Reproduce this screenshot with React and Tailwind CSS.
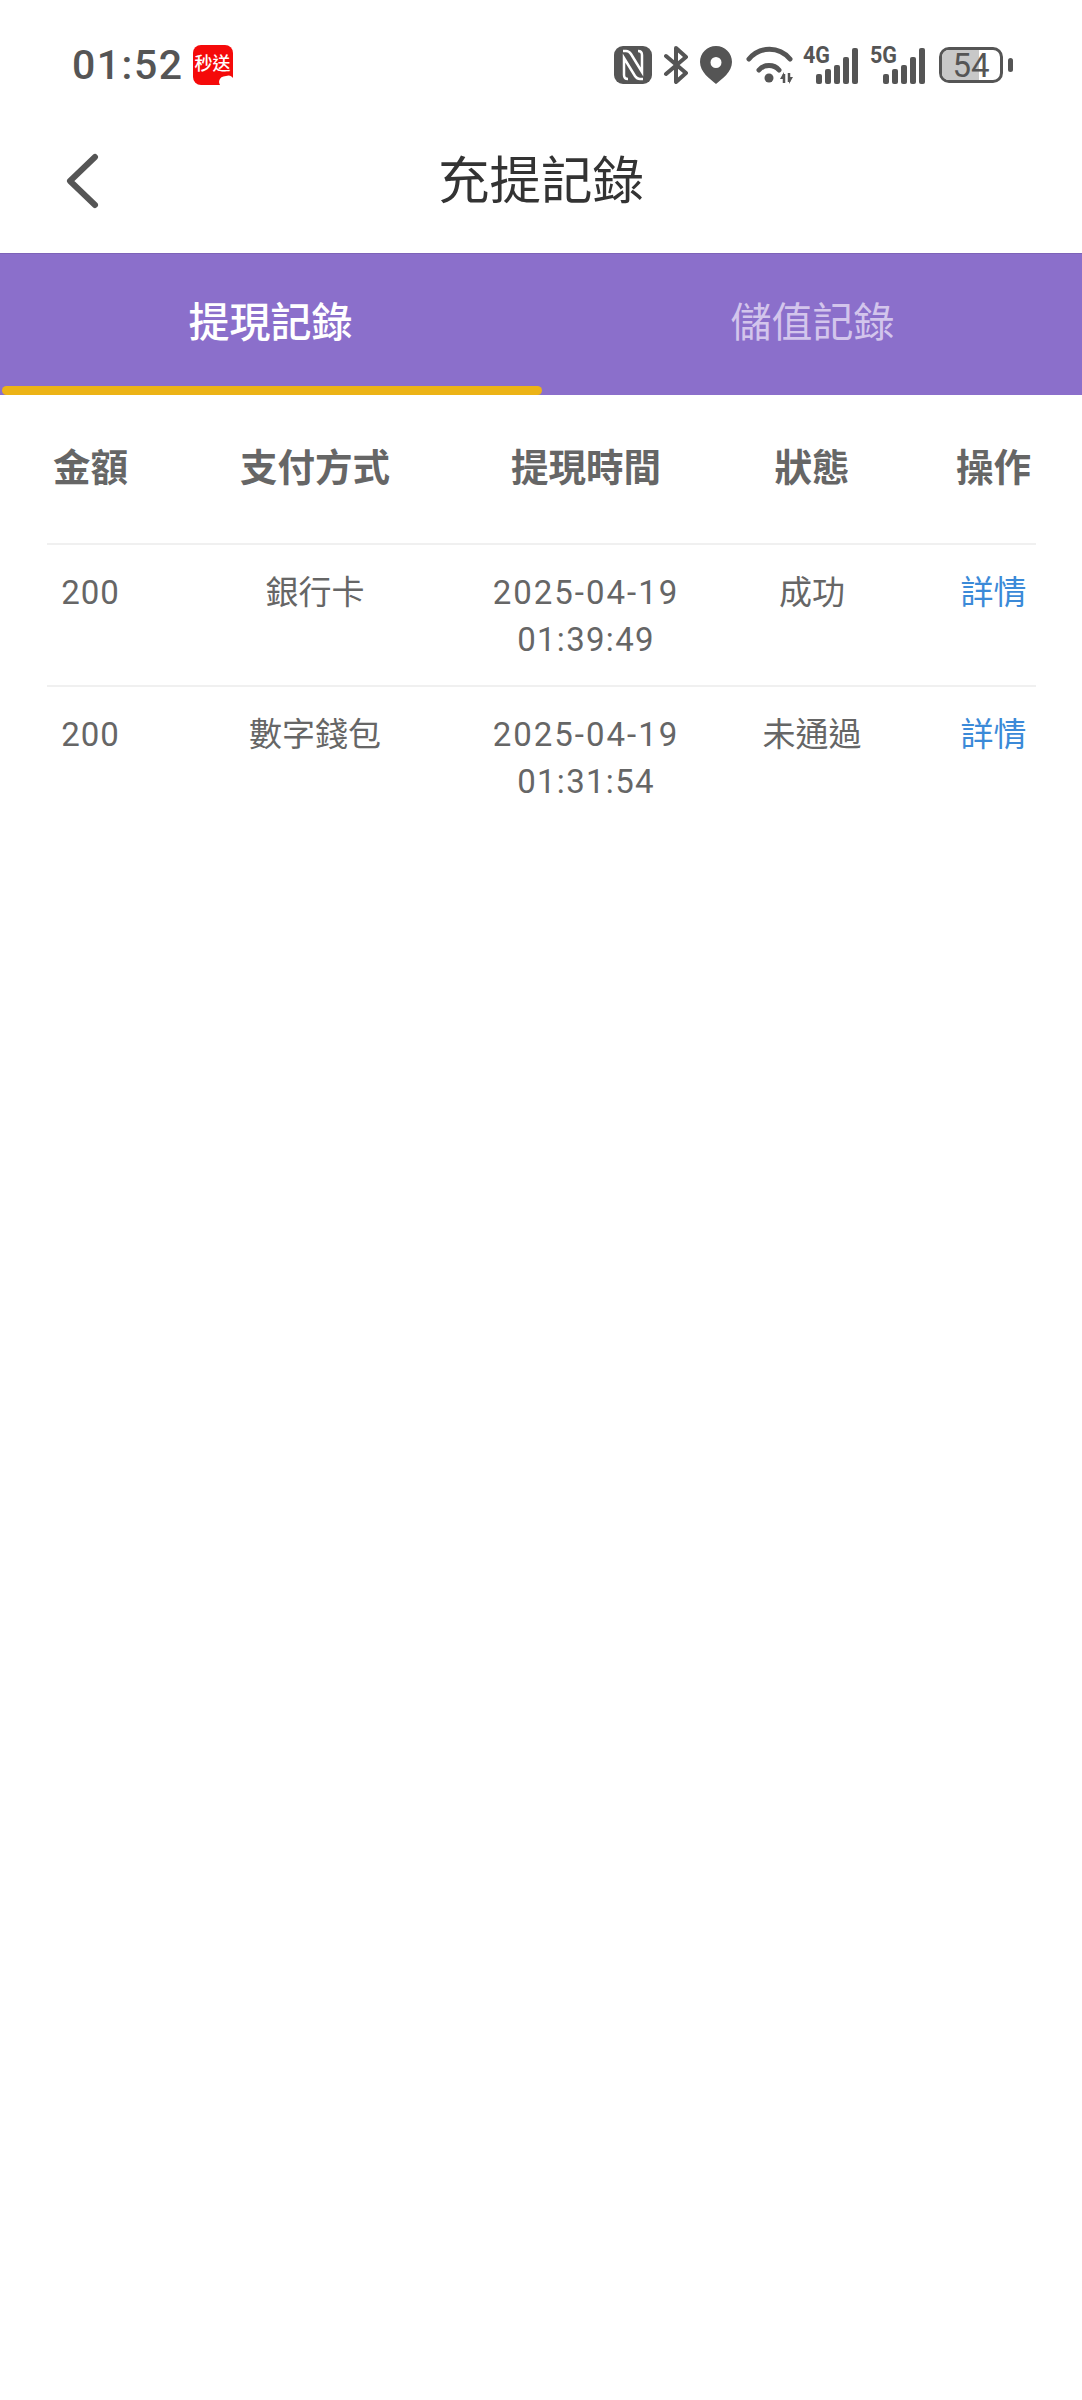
import React from 'react';

const rows = [
  { amount: '200', method: '銀行卡', date: '2025-04-19', time: '01:39:49', status: '成功' },
  { amount: '200', method: '數字錢包', date: '2025-04-19', time: '01:31:54', status: '未通過' },
];

const gridCols = 'grid grid-cols-[87px_352px_200px_252px_1fr] text-center';

function Signal({ label }) {
  return (
    <svg width="57" height="46" viewBox="0 -8 57 46" fill="#555" className="-mt-[8px]">
      <text x="0" y="17" fontSize="24" fontWeight="700" fontFamily="Roboto, sans-serif" fill="#555" textLength="27" lengthAdjust="spacingAndGlyphs">{label}</text>
      <rect x="13" y="28" width="6" height="10" rx="2" />
      <rect x="22" y="23" width="6" height="15" rx="2" />
      <rect x="31" y="19" width="6" height="19" rx="2" />
      <rect x="40" y="11" width="6" height="27" rx="2" />
      <rect x="49" y="2" width="6" height="36" rx="2" />
    </svg>
  );
}

function StatusIcons() {
  return (
    <div className="flex items-center">
      {/* nfc */}
      <svg width="38" height="38" viewBox="0 0 38 38" className="mr-[11px]">
        <rect x="0" y="0" width="38" height="38" rx="9" fill="#555" />
        <path d="M9 5 H12 Q15 5 17 8 L28 26 V9 Q28 5 24 5 M29 33 H26 Q23 33 21 30 L10 12 V29 Q10 33 14 33" stroke="#fff" strokeWidth="2.5" fill="none" />
      </svg>
      {/* bluetooth */}
      <svg width="26" height="38" viewBox="0 0 26 38" className="mr-[11px]" fill="none" stroke="#555" strokeWidth="4" strokeLinejoin="round" strokeLinecap="round">
        <path d="M3 10 L23 27 L13 36 V2 L23 11 L3 28" />
      </svg>
      {/* location */}
      <svg width="32" height="38" viewBox="0 0 32 38" className="mr-[14px]">
        <path fillRule="evenodd" fill="#555" d="M16 0 C7 0 0 7 0 16 C0 26 10 33 16 38 C22 33 32 26 32 16 C32 7 25 0 16 0 Z M16 11 A5.5 5.5 0 1 1 16 22 A5.5 5.5 0 1 1 16 11 Z" />
      </svg>
      {/* wifi */}
      <svg width="48" height="38" viewBox="0 0 48 38" className="mr-[9px]" fill="none" stroke="#555" strokeWidth="5" strokeLinecap="round">
        <path d="M3 13 C14 0 33 0 44 13" />
        <path d="M13 24 C18 18 28 18 33 24" />
        <circle cx="23" cy="32" r="4.5" fill="#555" stroke="none" />
        <path d="M38 28 V37 M43 27 V36" strokeWidth="2.5" strokeLinecap="butt" />
        <path d="M38 26 L34 33 H38 Z M43 38 L47 31 H43 Z" fill="#555" stroke="none" />
      </svg>
      <div className="mr-[10px] flex"><Signal label="4G" /></div>
      <div className="mr-[12px] flex"><Signal label="5G" /></div>
      {/* battery */}
      <div className="relative flex h-[36px] w-[64px] items-center justify-center overflow-hidden rounded-[10px] border-[3px] border-[#555]">
        <div className="absolute inset-y-0 left-0 w-[37px] bg-[#c8c8c8]" />
        <span className="relative text-[33px] leading-none text-[#555] font-['Roboto',sans-serif]">54</span>
      </div>
      <div className="ml-[5px] h-[14px] w-[5px] rounded-full bg-[#555]" />
    </div>
  );
}

export default function App() {
  return (
    <div className="h-[2400px] w-[1082px] bg-white font-['Roboto','Noto_Sans_CJK_TC',sans-serif]">
      <div className="flex h-[110px] items-start justify-between pl-[72px] pr-[69px] pt-[46px]">
        <div className="flex h-[38px] items-center">
          <span className="text-[41px] leading-none tracking-[1.5px] text-[#555] font-medium">01:52</span>
          <div className="relative ml-[9px] flex h-[40px] w-[40px] items-center justify-center rounded-[8px] bg-[#f50a0a]">
            <span className="whitespace-nowrap pb-[3px] text-[18px] font-medium leading-none text-white">秒送</span>
            <div className="absolute -bottom-[2px] -right-[1px] h-[11px] w-[15px] -rotate-12 rounded-full bg-white" />
          </div>
        </div>
        <StatusIcons />
      </div>

      <div className="relative flex h-[143px] items-center justify-center">
        <svg width="34" height="56" viewBox="0 0 34 56" className="absolute left-[65px] top-[43px]" fill="none" stroke="#555" strokeWidth="6" strokeLinecap="round" strokeLinejoin="round">
          <path d="M30 4 L5 28 L30 52" />
        </svg>
        <h1 className="text-[51.5px] font-normal leading-none text-[#333]">充提記錄</h1>
      </div>

      <div className="relative grid h-[142px] grid-cols-2 items-center border-t border-[#7d63b8] bg-[#8b6fcb] pb-[3px] text-center text-[41px] leading-none">
        <div className="font-medium text-white">提現記錄</div>
        <div className="pl-[2px] text-[#d3c5ec]">儲值記錄</div>
        <div className="absolute bottom-0 left-[2px] h-[9px] w-[540px] rounded-[5px] bg-[#ecb316]" />
      </div>

      <div className="ml-[47px] mr-[46px]">
        <div className={`${gridCols} h-[150px] items-center border-b-2 border-[#f0f0f0] text-[37.5px] font-bold leading-none text-[#666]`}>
          <div>金額</div>
          <div className="pl-[10px]">支付方式</div>
          <div>提現時間</div>
          <div>狀態</div>
          <div className="pl-[13px]">操作</div>
        </div>
        {rows.map((row, i) => (
          <div key={i} className={`${gridCols} pb-[22px] pt-[24px] text-[33px] leading-[47px] text-[#666] ${i === 0 ? 'border-b-2 border-[#f0f0f0]' : ''}`}>
            <div className="tracking-[1px]">{row.amount}</div>
            <div className="pl-[10px]">{row.method}</div>
            <div>
              <div className="tracking-[2px]">{row.date}</div>
              <div className="tracking-[1.3px]">{row.time}</div>
            </div>
            <div>{row.status}</div>
            <div className="pl-[13px] text-[#3b8ad8]">詳情</div>
          </div>
        ))}
      </div>
    </div>
  );
}
